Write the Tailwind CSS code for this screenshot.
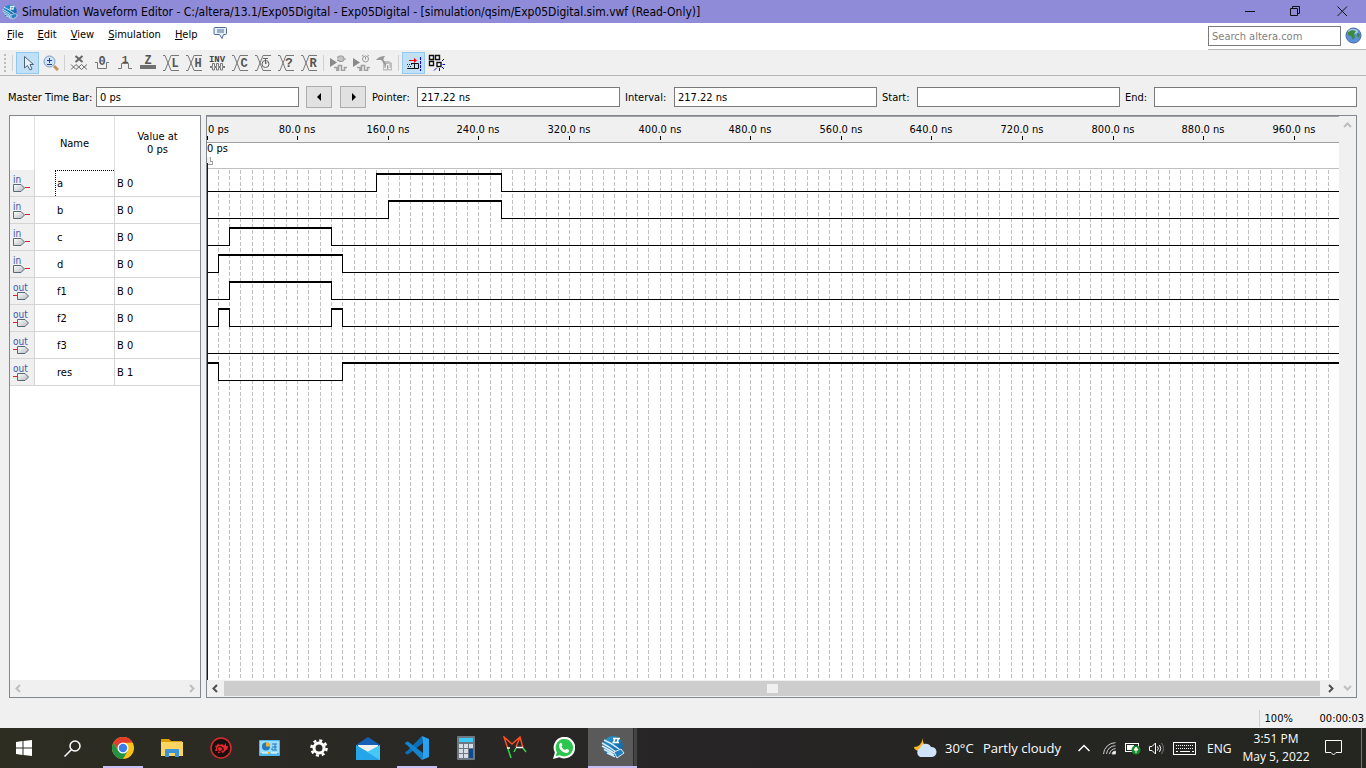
<!DOCTYPE html>
<html lang="en">
<head>
<meta charset="utf-8">
<title>Simulation Waveform Editor</title>
<script src="https://cdn.jsdelivr.net/npm/@tailwindcss/browser@4"></script>
</head>
<body class="h-screen overflow-hidden flex flex-col bg-[#f0f0f0] text-black text-[11px] leading-[13px] font-['DejaVu_Sans_Condensed','Noto_Sans',sans-serif]">

<svg class="absolute size-0">
  <defs>
    <linearGradient id="chip" x1="0" y1="0" x2="1" y2="1"><stop offset="0" stop-color="#ffffff"/><stop offset="1" stop-color="#b4b8bc"/></linearGradient>
    <linearGradient id="ball" x1="0" y1="0" x2="1" y2="1"><stop offset="0" stop-color="#2f9bd8"/><stop offset="1" stop-color="#0c5a99"/></linearGradient>
    <symbol id="altera" viewBox="0 0 24 24">
      <circle cx="12" cy="11" r="10" fill="url(#ball)"/>
      <path d="M12.500 8L14 3M16 8L17.500 3M12 3.500H19M11.500 7.500H18" stroke="#fff" stroke-width="1.500"/>
      <path d="M1 8C5 10 10 13 15 17M1 11C5 13 9 15 13 18M3 14.500C7 16 10 18 13 20M6 18C9 19 11 20 14 22M3 5C8 7 13 10 18 14" fill="none" stroke="#d8ecf8" stroke-width="1.400"/>
      <path d="M13 17L20 14L23 18L16 23Z" fill="#2380bd" stroke="#dcecf6"/>
    </symbol>
    <symbol id="pin-in" viewBox="0 0 17 8">
      <path d="M.5 .5H8L11.500 4L8 7.500H.5Z" fill="url(#chip)" stroke="#566878"/><path d="M12 3H17V4H12Z" fill="#e0202c" shape-rendering="crispEdges"/>
    </symbol>
    <symbol id="pin-out" viewBox="0 0 17 8">
      <path d="M4.500 .5H12L15.500 4L12 7.500H4.500Z" fill="url(#chip)" stroke="#566878"/><path d="M0 3H4V4H0Z" fill="#e0202c" shape-rendering="crispEdges"/>
    </symbol>
    <symbol id="cross" viewBox="0 0 17 16"><path d="M0 .5H2L8 15.500H16M0 15.500H2L8 .5H16" fill="none" stroke="#777"/></symbol>
    <symbol id="playwave" viewBox="0 0 17 16">
      <path d="M0 3L7 7.500L0 12Z" fill="#8a8a8a"/><path d="M4 12.500H7V15.500M6 15.500H8.500V10.500H11.500V15.500H14.500V12.500H17" fill="none" stroke="#a0a0a0" stroke-width="1.600"/>
    </symbol>
  </defs>
</svg>

<header class="h-[23px] shrink-0 flex items-center bg-[#8f8bd8] pl-[2px]">
  <svg class="size-4 mr-1"><use href="#altera"/></svg>
  <h1 class="flex-1 text-[12px] whitespace-nowrap pt-px">Simulation Waveform Editor - C:/altera/13.1/Exp05Digital - Exp05Digital - [simulation/qsim/Exp05Digital.sim.vwf (Read-Only)]</h1>
  <button aria-label="Minimize" class="w-[46px] h-[22px] grid place-items-center"><svg class="w-[11px] h-[11px]" fill="none" stroke="#111"><path d="M0 5.500H10"/></svg></button>
  <button aria-label="Restore" class="w-[45px] h-[22px] grid place-items-center"><svg class="w-[11px] h-[11px]" fill="none" stroke="#111"><path d="M.5 2.500H7.500V9.500H.5ZM2.500 2.500V.5H9.500V7.500H7.500"/></svg></button>
  <button aria-label="Close" class="w-12 h-[22px] grid place-items-center"><svg class="w-[11px] h-[11px]" fill="none" stroke="#111"><path d="M.5 .5L10 10M10 .5L.5 10"/></svg></button>
</header>

<nav class="h-[27px] shrink-0 flex bg-white">
  <div class="flex-1 flex items-start pt-[5px] pl-[7px] gap-[14px]">
    <button><u>F</u>ile</button>
    <button><u>E</u>dit</button>
    <button><u>V</u>iew</button>
    <button><u>S</u>imulation</button>
    <button><u>H</u>elp</button>
    <button aria-label="Feedback" class="ml-[2px] -mt-[2px]"><svg class="w-4 h-[14px]"><path d="M1 2.500Q1 1.500 2 1.500H12.500Q13.500 1.500 13.500 2.500V7.500Q13.500 8.500 12.500 8.500H10.500L9 12.500L6.500 8.500H2Q1 8.500 1 7.500Z" fill="#e9f0f8" stroke="#4a6a94"/><path d="M4 4H11M4 6H11" stroke="#4a6a94"/></svg></button>
  </div>
  <div class="flex items-start gap-1 pt-[3px] pr-1 border-b border-[#b8b8b8]">
    <input aria-label="Search altera.com" placeholder="Search altera.com" class="w-[133px] h-5 border border-[#7a7a7a] px-[3px] pt-px bg-white placeholder-[#7f7f7f]">
    <button aria-label="Search"><svg class="w-[17px] h-[18px]"><circle cx="8.500" cy="9.500" r="7.500" fill="#5b90dc" stroke="#4569a6"/><ellipse cx="8" cy="5.500" rx="5" ry="2.500" fill="#a9cbf5"/><path d="M3 6L7 4L11 5L9 8L10 11L8 14L6 10L3 9ZM12 7L15 8L14 12L12 10Z" fill="#3b8b3a"/></svg></button>
  </div>
</nav>

<div role="toolbar" class="h-[26px] shrink-0 flex items-center border-b border-[#b6b6b6] pl-1 text-[#6a6a6a]">
  <span class="w-[2px] h-[18px] border-l-2 border-dotted border-[#bbb]"></span>
  <span class="w-px h-4 bg-[#d0d0d0] ml-[6px] mr-[3px]"></span>
  <button aria-label="Select" class="w-[23px] h-[22px] grid place-items-center bg-[#c1dff5] border border-[#90c8f6]"><svg class="size-4"><path d="M4.500 1.500V13L7.500 10.500L10 15L12 14L10 9.500H13.500Z" fill="#e9f1f9" stroke="#4a6482"/></svg></button>
  <button aria-label="Zoom" class="w-[23px] h-[22px] grid place-items-center"><svg class="size-4"><path d="M11 11L15 15" stroke="#c59357" stroke-width="3"/><circle cx="6.500" cy="6.500" r="5.500" fill="#cfe2f6" stroke="#7c9cc4"/><path d="M4 5.500H9M6.500 3V8M4 9.500H9" stroke="#2740a8"/></svg></button>
  <span class="w-px h-4 bg-[#d0d0d0] ml-[2px] mr-[3px]"></span>
  <button aria-label="Forcing unknown" class="w-[23px] h-[22px] grid place-items-center"><svg class="w-[17px] h-4 overflow-visible"><path d="M4.500 1L11.500 7M11.500 1L4.500 7" stroke="#666" stroke-width="2"/><path d="M0 9.500L5 14.500L10.500 9.500L16 14.500M0 14.500L5 9.500L10.500 14.500L16 9.500" fill="none" stroke="#666"/></svg></button>
  <button aria-label="Forcing low" class="w-[23px] h-[22px] grid place-items-center"><svg class="w-[17px] h-4 overflow-visible" font-family="Liberation Mono" font-weight="bold"><path d="M1 7.500H3.500V13.500H12.500V7.500H15" fill="none" stroke="#777"/><text x="8" y="10" text-anchor="middle" font-size="12" fill="#555">0</text></svg></button>
  <button aria-label="Forcing high" class="w-[23px] h-[22px] grid place-items-center"><svg class="w-[17px] h-4 overflow-visible" font-family="Liberation Mono" font-weight="bold"><path d="M1 13.500H4.500V8.500H11.500V13.500H15" fill="none" stroke="#777"/><text x="8" y="8" text-anchor="middle" font-size="11" fill="#555">1</text></svg></button>
  <button aria-label="High impedance" class="w-[23px] h-[22px] grid place-items-center"><svg class="w-[17px] h-4 overflow-visible" font-family="Liberation Mono" font-weight="bold"><rect y="10" width="16" height="4" fill="#707070"/><text x="8" y="9" text-anchor="middle" font-size="12" fill="#555">Z</text></svg></button>
  <button aria-label="Weak low" class="w-[23px] h-[22px] grid place-items-center"><svg class="w-[17px] h-4 overflow-visible" font-family="Liberation Mono"><use href="#cross"/><text x="12" y="12" text-anchor="middle" font-weight="bold" font-size="12" fill="#555">L</text></svg></button>
  <button aria-label="Weak high" class="w-[23px] h-[22px] grid place-items-center"><svg class="w-[17px] h-4 overflow-visible" font-family="Liberation Mono"><use href="#cross"/><text x="12" y="12" text-anchor="middle" font-weight="bold" font-size="12" fill="#555">H</text></svg></button>
  <button aria-label="Invert" class="w-[23px] h-[22px] grid place-items-center"><svg class="w-[17px] h-4 overflow-visible" font-family="Liberation Mono" font-weight="bold"><text x="8" y="7" text-anchor="middle" font-size="9" fill="#444">INV</text><path d="M1 11.500H3.500V8.500H5.500V11.500H7.500V8.500H9.500V11.500H11.500V8.500H13.500V11.500H16M1 12.500H3.500V15H5.500V12.500H7.500V15H9.500V12.500H11.500V15H13.500V12.500H16" fill="none" stroke="#777"/></svg></button>
  <button aria-label="Count value" class="w-[23px] h-[22px] grid place-items-center"><svg class="w-[17px] h-4 overflow-visible" font-family="Liberation Mono"><use href="#cross"/><text x="12" y="12" text-anchor="middle" font-weight="bold" font-size="12" fill="#555">C</text></svg></button>
  <button aria-label="Overwrite clock" class="w-[23px] h-[22px] grid place-items-center"><svg class="w-[17px] h-4 overflow-visible"><use href="#cross"/><circle cx="10.500" cy="9" r="3.500" fill="#f0f0f0" stroke="#666"/><path d="M10.500 9V3M8 3.500H13M10.500 9L12 7.500" stroke="#666" fill="none"/></svg></button>
  <button aria-label="Arbitrary value" class="w-[23px] h-[22px] grid place-items-center"><svg class="w-[17px] h-4 overflow-visible" font-family="Liberation Mono"><use href="#cross"/><text x="11" y="12" text-anchor="middle" font-weight="bold" font-size="13" fill="#555">?</text></svg></button>
  <button aria-label="Random values" class="w-[23px] h-[22px] grid place-items-center"><svg class="w-[17px] h-4 overflow-visible" font-family="Liberation Mono"><use href="#cross"/><text x="12" y="12" text-anchor="middle" font-weight="bold" font-size="12" fill="#555">R</text></svg></button>
  <span class="w-px h-4 bg-[#d0d0d0] ml-[2px] mr-[3px]"></span>
  <button aria-label="Run functional simulation" class="w-[23px] h-[22px] grid place-items-center"><svg class="w-[17px] h-4 overflow-visible"><use href="#playwave"/><path d="M7 2H9V1H12Q14 1 14 4Q14 6.500 12 6.500H9V5.500H7M14 4H16" fill="#c4c4c4" stroke="#999"/></svg></button>
  <button aria-label="Run timing simulation" class="w-[23px] h-[22px] grid place-items-center"><svg class="w-[17px] h-4 overflow-visible"><use href="#playwave"/><circle cx="12.500" cy="4" r="3" fill="#eee" stroke="#999"/><path d="M12.500 2V4.500M9 1L10.500 0M16 1L14.500 0" stroke="#999"/></svg></button>
  <button aria-label="Generate testbench" class="w-[23px] h-[22px] grid place-items-center"><svg class="w-[17px] h-4 overflow-visible"><path d="M7 6H13L16 8V15.500H7Z" fill="#bdbdbd"/><path d="M0 5Q3 1 9 1L7 5H3Z" fill="#999"/><path d="M5 3L12 13" stroke="#999" stroke-width="2"/><path d="M8 13.500H10.500V9.500H13V13.500H15" fill="none" stroke="#f4f4f4"/></svg></button>
  <span class="w-px h-4 bg-[#d0d0d0] ml-[2px] mr-[3px]"></span>
  <button aria-label="Snap to transition" class="w-[23px] h-[22px] grid place-items-center bg-[#c1dff5] border border-[#90c8f6]"><svg class="size-4 overflow-visible"><path d="M3 5.500H9" stroke="#f00"/><path d="M8 3L11 5.500L8 8Z" fill="#f00"/><path d="M1 9.500H6M2 11.500H6M1 13.500H6" stroke="#333" stroke-dasharray="1 1"/><path d="M5 8.500H12.500V13.500H2M8.500 8.500V13.500" fill="none" stroke="#111"/><path d="M14.500 2V16" stroke="#00f" stroke-dasharray="3 1"/></svg></button>
  <button aria-label="Snap to grid" class="w-[23px] h-[22px] grid place-items-center"><svg class="w-[17px] h-4 overflow-visible"><path d="M1.500 .5H5.500V4.500H1.500ZM7.500 .5H11.500V4.500H7.500ZM1.500 6.500H5.500V10.500H1.500ZM9 7.500H13V11.500H9Z" fill="#fff" stroke="#111" stroke-width="1.400"/><path d="M14 6L16 4M14.500 9.500H17M14 12L16 14M11.500 13V16M8.500 13L6 15.500" stroke="#00f"/></svg></button>
</div>

<form class="h-[39px] shrink-0 flex items-start pt-[11px] pl-2 pr-[9px]">
  <label for="mtb" class="w-[88px] pt-1 whitespace-nowrap">Master Time Bar:</label>
  <input id="mtb" value="0 ps" class="flex-1 min-w-0 h-5 border border-[#7a7a7a] bg-white px-[3px] pt-px">
  <button type="button" aria-label="Previous" class="ml-[7px] w-[26px] h-[22px] -mt-px border border-[#adadad] bg-[#e1e1e1] grid place-items-center"><svg class="w-[5px] h-2"><path d="M4 0V8L0 4Z"/></svg></button>
  <button type="button" aria-label="Next" class="ml-2 mr-[6px] w-[26px] h-[22px] -mt-px border border-[#adadad] bg-[#e1e1e1] grid place-items-center"><svg class="w-[5px] h-2"><path d="M1 0V8L5 4Z"/></svg></button>
  <label for="ptr" class="w-[45px] pt-1">Pointer:</label>
  <input id="ptr" value="217.22 ns" class="flex-1 min-w-0 h-5 border border-[#7a7a7a] bg-white px-[3px] pt-px mr-[5px]">
  <label for="int" class="w-[49px] pt-1">Interval:</label>
  <input id="int" value="217.22 ns" class="flex-1 min-w-0 h-5 border border-[#7a7a7a] bg-white px-[3px] pt-px mr-[5px]">
  <label for="start" class="w-[35px] pt-1">Start:</label>
  <input id="start" class="flex-1 min-w-0 h-5 border border-[#7a7a7a] bg-white px-[3px] mr-[5px]">
  <label for="end" class="w-[29px] pt-1">End:</label>
  <input id="end" class="flex-1 min-w-0 h-5 border border-[#7a7a7a] bg-white px-[3px]">
</form>

<main class="flex-1 min-h-0 flex gap-[5px] pl-[9px] pr-[9px]">
  <section class="w-48 shrink-0 flex flex-col border border-[#828790] bg-white">
    <div class="flex-1 min-h-0 overflow-hidden">
      <table class="w-full table-fixed border-separate border-spacing-0">
        <colgroup><col class="w-[25px]"><col class="w-[80px]"><col></colgroup>
        <thead>
          <tr class="h-[54px]">
            <th class="border-r border-[#e0e0e0]"></th>
            <th class="border-r border-[#e0e0e0] font-normal">Name</th>
            <th class="font-normal">Value at<br>0 ps</th>
          </tr>
        </thead>
        <tbody id="rows"></tbody>
      </table>
    </div>
    <div class="h-[17px] flex items-center justify-between px-[5px] bg-[#f0f0f0] text-[#bfbfbf]">
      <svg class="w-[6px] h-[9px]" fill="none" stroke="currentColor" stroke-width="2"><path d="M5 1L1.500 4.500L5 8"/></svg>
      <svg class="w-[6px] h-[9px]" fill="none" stroke="currentColor" stroke-width="2"><path d="M1 1L4.500 4.500L1 8"/></svg>
    </div>
  </section>

  <section class="flex-1 min-w-0 flex border border-[#828790] bg-white">
    <div class="flex-1 min-w-0 flex flex-col">
      <svg id="ruler" class="w-full h-[54px] shrink-0 overflow-hidden" shape-rendering="crispEdges">
        <rect width="100%" height="27" fill="#f0f0f0"/>
        <path d="M0 .5H5000M0 26.500H5000" stroke="#a0a0a0"/>
        <path d="M0 52.500H5000" stroke="#c0c0c0"/>
        <text x="0" y="36">0 ps</text>
        <path d="M0 41H4V48H0Z" fill="#f0f0f0"/>
        <path d="M3.500 41V45.500H5V48.500H0" fill="none" stroke="#a0a0a0"/>
        <path d="M.5 47V54" stroke="#0000e6"/>
      </svg>
      <svg id="plot" class="w-full flex-1 min-h-0 overflow-hidden" shape-rendering="crispEdges">
        <path id="grid" stroke="#c0c0c0" stroke-dasharray="4 2"/>
        <path id="thin" stroke="#000"/>
        <path id="thick" stroke="#000" stroke-width="2"/>
        <path d="M.5 0V5000" stroke="#0000e6"/>
      </svg>
      <div class="h-[17px] shrink-0 flex items-center bg-[#f0f0f0] text-[#505050] pb-px">
        <svg class="w-[6px] h-[9px] ml-[5px] mr-[6px] shrink-0" fill="none" stroke="currentColor" stroke-width="2"><path d="M5 1L1.500 4.500L5 8"/></svg>
        <div class="flex-1 h-[15px] bg-[#cdcdcd] grid place-items-center"><span class="w-[11px] h-[9px] bg-[#f0f0f0]"></span></div>
        <svg class="w-[6px] h-[9px] ml-2 mr-[5px] shrink-0" fill="none" stroke="currentColor" stroke-width="2"><path d="M1 1L4.500 4.500L1 8"/></svg>
      </div>
    </div>
    <div class="w-[17px] shrink-0 flex flex-col items-center justify-between py-[6px] bg-[#f0f0f0] text-[#bfbfbf]">
      <svg class="w-[9px] h-[6px]" fill="none" stroke="currentColor" stroke-width="2"><path d="M1 5L4.500 1.500L8 5"/></svg>
      <svg class="w-[9px] h-[6px]" fill="none" stroke="currentColor" stroke-width="2"><path d="M1 1L4.500 4.500L8 1"/></svg>
    </div>
  </section>
</main>

<div role="status" class="h-[30px] shrink-0 flex items-center justify-end pt-[11px] pr-[2px]">
  <span class="border-l border-[#d0d0d0] w-[61px] pl-[5px] py-[2px]">100%</span>
  <span>00:00:03</span>
</div>

<footer class="h-10 shrink-0 flex items-stretch text-white bg-linear-to-r from-[#2d2d22] via-[#272526] to-[#24261f] font-['Open_Sans','Noto_Sans',sans-serif]">
  <button aria-label="Start" class="w-12 grid place-items-center"><svg class="w-4 h-4"><path d="M0 2L6.500 1V7.500H0ZM7.500 1L16 0V7.500H7.500ZM0 8.500H6.500V15L0 14ZM7.500 8.500H16V16L7.500 15Z" fill="#fff"/></svg></button>
  <button aria-label="Search" class="w-12 grid place-items-center mr-[2px]"><svg class="w-[17px] h-[17px]" fill="none" stroke="#fff" stroke-width="1.500"><circle cx="11" cy="6" r="5"/><path d="M7.500 9.500L.5 16.500"/></svg></button>
  <button aria-label="Chrome" class="w-[49px] grid place-items-center relative"><svg class="size-[22px]" viewBox="0 0 24 24"><circle cx="12" cy="12" r="12" fill="#fbc116"/><path d="M1.600 6A12 12 0 0 1 22.400 6L12 6.500L6.800 15Z" fill="#e33b2e"/><path d="M1.600 6A12 12 0 0 0 12 24L17.200 15L12 17.500L6.800 15Z" fill="#229342"/><circle cx="12" cy="12" r="6" fill="#fff"/><circle cx="12" cy="12" r="4.600" fill="#3b7ded"/></svg><span class="absolute bottom-0 left-[5px] w-10 h-[2px] bg-[#c5bff5]"></span></button>
  <button aria-label="File Explorer" class="w-[49px] grid place-items-center"><svg class="w-[22px] h-[18px]"><path d="M0 0H8L10 2H21V6H0Z" fill="#dba100"/><path d="M0 3H22V17H0Z" fill="#fcd462"/><path d="M4 18V11Q4 10 5 10H17Q18 10 18 11V18H14V14H8V18Z" fill="#3a94dc"/></svg></button>
  <button aria-label="Red Dragon" class="w-[49px] grid place-items-center"><svg class="size-[22px]"><circle cx="11" cy="11" r="10" fill="#16100f" stroke="#dc2a30" stroke-width="1.500"/><path d="M5 9L7 8.500L8 6.500L10 8L12 7L14 8.500L16 6L16 9L18 9L17.500 12L15 14L13 16L11 15L8 16.500L8 14L5 14L6 11Z" fill="#e9262c"/><circle cx="10" cy="12" r="2.500" fill="none" stroke="#16100f"/><path d="M12.500 10L13.500 12.500L12.500 14" fill="none" stroke="#16100f"/></svg></button>
  <button aria-label="Control Panel" class="w-[49px] grid place-items-center"><svg class="w-[21px] h-4"><rect width="21" height="16" rx="1" fill="#4db8ec"/><rect x="1" y="1" width="19" height="12" fill="#9bdcfa"/><circle cx="7" cy="6.500" r="4" fill="#2079c4"/><path d="M7 2.500A4 4 0 0 1 11 6.500H7Z" fill="#f5b51d"/><path d="M13 8V10M16 4V10M13 4H18M13 7H18M13 10H18" stroke="#1e78bf"/><path d="M3 13H9M12 13H18" stroke="#fff"/><path d="M9 13H11" stroke="#f5a51d" stroke-width="2"/></svg></button>
  <button aria-label="Settings" class="w-[49px] grid place-items-center"><svg class="size-[18px]" fill="none" stroke="#fff"><circle cx="9" cy="9" r="5" stroke-width="3"/><circle cx="9" cy="9" r="7.500" stroke-width="2.600" stroke-dasharray="3 2.890"/></svg></button>
  <button aria-label="Mail" class="w-[49px] grid place-items-center"><svg class="w-6 h-[23px]"><path d="M0 8L12 0L24 8V12H0Z" fill="#1560b4"/><path d="M2 8H22V13L12 17L3 12Z" fill="#f0f0f0"/><path d="M0 8L24 22V23H0Z" fill="#25a5ea"/><path d="M24 8L11 15L24 23Z" fill="#45c8f7"/></svg></button>
  <button aria-label="Visual Studio Code" class="w-[49px] grid place-items-center relative"><svg class="w-6 h-6"><path d="M17 0L2 15L0 16L1 18L3 18.500L18 7Z" fill="#0c70b8"/><path d="M17 24L2 9L0 8L1 6L3 5.500L18 17Z" fill="#1484cf"/><path d="M17 0L24 3V21L17 24L18 17V7Z" fill="#28a3f2"/></svg><span class="absolute bottom-0 left-[5px] w-10 h-[2px] bg-[#c5bff5]"></span></button>
  <button aria-label="Calculator" class="w-[49px] grid place-items-center"><svg class="w-[18px] h-6"><rect width="18" height="24" rx="1" fill="#6c7884"/><rect x="2" y="2" width="14" height="4" fill="#40c8f4"/><path d="M2 8H6V12H2ZM7 8H11V12H7ZM12 8H16V12H12ZM2 13H6V17H2ZM7 13H11V17H7ZM2 18H6V22H2ZM7 18H11V22H7Z" fill="#d7dde2"/><path d="M12 13H16V22H12Z" fill="#0e4a94"/></svg></button>
  <button aria-label="MA" class="w-[49px] grid place-items-center"><svg class="w-6 h-6" fill="none" stroke-width="1.500"><path d="M5 13L1 1L9 8L17 1L20 12M17 1L13 11" stroke="#f9501d"/><path d="M4 12H7M13 11.500H20" stroke="#fff"/><path d="M5 13L8 22M13 12L11 16M20 12L23 16" stroke="#2fd64a"/></svg></button>
  <button aria-label="WhatsApp" class="w-[49px] grid place-items-center"><svg class="w-[22px] h-[22px]" viewBox="0 0 24 24"><path d="M0 24L2 17A11.800 11.800 0 1 1 7 22Z" fill="#fff"/><path d="M3 21L4.200 16.500A9.500 9.500 0 1 1 7.500 19.800Z" fill="#2cc64e"/><path d="M8 6.500Q9 6 9.500 7L10.300 9Q10 10 9.300 10.500Q10.500 13.200 13.300 14.300L14.500 13Q15.500 13 17.500 14.300Q17.500 17.500 14.500 17.500Q8 16.500 6.500 10Q6.500 7.500 8 6.500Z" fill="#fff"/></svg></button>
  <button aria-label="Simulation Waveform Editor" class="w-[49px] grid place-items-center relative bg-[#5b5a5b] border-b-2 border-[#c5bff5]"><svg class="size-6"><use href="#altera"/></svg><span class="absolute right-0 top-0 w-1 h-full bg-[#454445] border-l border-[#2d2c2d]"></span></button>

  <div class="ml-auto flex items-center text-[13px]">
    <svg class="w-[23px] h-5 mr-2"><path d="M9 0A9 9 0 0 0 13 9L5 13Q0 12 0 9Q7 9 9 0Z" fill="#fbb91c"/><path d="M6 19A5 5 0 0 1 6 10A6 6 0 0 1 17 9A5 5 0 0 1 18 19Z" fill="#cfe4fa"/></svg>
    <span class="w-[38px]">30°C</span>
    <span class="w-[95px] whitespace-nowrap">Partly cloudy</span>
    <svg class="w-[12px] h-2 mr-[13px]" fill="none" stroke="#fff" stroke-width="1.500"><path d="M.5 7L6 1.500L11.500 7"/></svg>
    <svg class="w-[13px] h-[13px] mr-[9px]" fill="none" stroke="#ccc"><path d="M.5 12A12 12 0 0 1 12.500 .7M3.500 12A9 9 0 0 1 12.500 3.700M6.500 12A6 6 0 0 1 12.500 6.700" /><path d="M9 12A3.500 3.500 0 0 1 12.500 9V12Z" fill="#fff"/></svg>
    <svg class="w-4 h-[13px] mr-2"><rect x=".5" y="1.500" width="13" height="8" fill="none" stroke="#fff"/><path d="M2 3H9V8H2Z" fill="#fff"/><circle cx="11" cy="8" r="4.500" fill="#178a2c"/><path d="M11 5L13 8H9ZM11 8V11" fill="#fff" stroke="#fff"/></svg>
    <svg class="w-4 h-[13px] mr-2" fill="none" stroke="#fff"><path d="M.5 4.500H3L6.500 1V12L3 8.500H.5Z"/><path d="M8.500 4.500Q10 6.500 8.500 8.500"/><path d="M10.500 3Q13 6.500 10.500 10"/><path d="M12.500 1Q16.500 6.500 12.500 12" stroke="#777"/></svg>
    <svg class="w-[23px] h-[13px] mr-[11px]" fill="none" stroke="#fff"><rect x=".5" y=".5" width="22" height="12"/><path d="M3 3.500H21M3 6.500H21" stroke-dasharray="1 1"/><path d="M3 9.500H5M7 9.500H17M19 9.500H21"/></svg>
    <span class="w-[25px] text-[12px]">ENG</span>
    <div class="w-[88px] text-center text-[12px] leading-[18px]">3:51 PM<br>May 5, 2022</div>
    <button aria-label="Notifications" class="mr-[18px] ml-[5px]"><svg class="w-[19px] h-4" fill="none" stroke="#fff"><path d="M.5 .5H16.500V12.500H11L8.500 15L6 12.500H.5Z"/></svg></button>
    <span class="w-px h-10 bg-[#777] mr-1 -ml-px"></span>
  </div>
</footer>

<script>
  // Each signal: name, direction, value at the time bar, level at 0, times (ns) at which it toggles.
  const signals = [
    ['a', 'in', 'B 0', 0, [150, 260]],
    ['b', 'in', 'B 0', 0, [160, 260]],
    ['c', 'in', 'B 0', 0, [20, 110]],
    ['d', 'in', 'B 0', 0, [10, 120]],
    ['f1', 'out', 'B 0', 0, [20, 110]],
    ['f2', 'out', 'B 0', 0, [10, 20, 110, 120]],
    ['f3', 'out', 'B 0', 0, []],
    ['res', 'out', 'B 1', 1, [10, 120]],
  ];
  const px = ns => Math.floor(ns * 1.1325);
  const END = 5000;

  document.getElementById('rows').innerHTML = signals.map(([name, dir, value], i) => `
    <tr class="h-[27px]">
      <td class="bg-[#f0f0f0] border-r border-b border-[#d4d4d4] p-0 pl-[3px]">
        <div class="text-[#3a57ae] text-[10px] leading-[9px]">${dir}</div>
        <svg class="w-[17px] h-2 block"><use href="#pin-${dir}"/></svg>
      </td>
      <td class="border-r border-b border-[#d4d4d4] p-0 pl-5"><div class="${i ? 'pl-[2px] pt-px h-[26px] leading-[26px]' : 'pl-px h-[26px] leading-[26px] border-t border-l border-dotted border-black'}">${name}</div></td>
      <td class="border-b border-[#d4d4d4] p-0 pl-[2px]"><div class="pt-px h-[26px] leading-[26px]">${value}</div></td>
    </tr>`).join('');

  let thin = '', thick = '';
  signals.forEach(([, , , start, times], i) => {
    const lo = 27 * i + 21.5, hi = 27 * i + 4;
    let x = 0, level = start;
    for (const t of [...times, null]) {
      const next = t === null ? END : px(t);
      if (level) thick += `M${x} ${hi}H${next + 1}`; else thin += `M${x} ${lo}H${next}`;
      if (t !== null) thin += `M${next + .5} ${hi - 1}V${lo + .5}`;
      x = next; level = 1 - level;
    }
  });
  document.getElementById('thin').setAttribute('d', thin);
  document.getElementById('thick').setAttribute('d', thick);

  let grid = '';
  for (let t = 10; px(t) < END; t += 10) grid += `M${px(t) + .5} 0V3000`;
  document.getElementById('grid').setAttribute('d', grid);

  let marks = '<text x="1" y="17">0 ps</text><path d="M.5 20V24" stroke="#000"/>';
  for (let t = 80; t <= 960; t += 80) marks += `<text x="${px(t)}" y="17" text-anchor="middle">${t}.0 ns</text><path d="M${px(t) + .5} 20V24" stroke="#000"/>`;
  document.getElementById('ruler').insertAdjacentHTML('beforeend', marks);
</script>
</body>
</html>
